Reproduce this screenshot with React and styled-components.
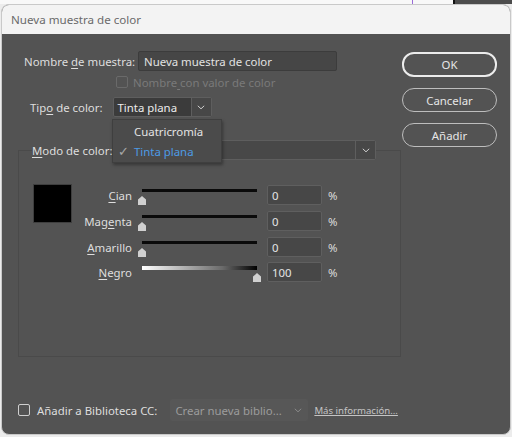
import React from "react";
import styled, { createGlobalStyle } from "styled-components";

const GlobalStyle = createGlobalStyle`
  html, body {
    margin: 0;
    padding: 0;
  }
  body {
    font-family: "Noto Sans", "Open Sans", sans-serif;
    font-size: 11.4px;
  }
`;

const Desktop = styled.div`
  width: 512px;
  height: 437px;
  box-sizing: border-box;
  padding: 4px 1px 0 1px;
  background-color: #ececec;
  background-image: linear-gradient(
    to right,
    #f8f8f8 412px,
    #9a6bd8 412px 413px,
    #f8f8f8 413px 453px,
    #111 453px 455px,
    #4c4c4c 455px
  );
  background-size: 100% 4px;
  background-repeat: no-repeat;
  overflow: hidden;
`;

const Window = styled.div`
  width: 510px;
  height: 431px;
  box-sizing: border-box;
  border: 1px solid #c9c9c9;
  border-radius: 8px;
  overflow: hidden;
  display: flex;
  flex-direction: column;
  background: #535353;
`;

const TitleBar = styled.div`
  height: 29px;
  flex: none;
  background: #f3f3f3;
  color: #6a6a6a;
  display: flex;
  align-items: center;
  padding-left: 9px;
  font-size: 11.6px;
`;

const Body = styled.div`
  flex: 1;
  display: flex;
  flex-direction: column;
  padding-top: 17px;
  color: #dcdcdc;
`;

const Main = styled.div`
  display: flex;
`;

const LeftColumn = styled.div`
  width: 400px;
  display: flex;
  flex-direction: column;
`;

const Row = styled.div`
  display: flex;
  align-items: center;
  height: ${({ $h }) => $h || 20}px;
  margin-left: ${({ $left }) => $left}px;
  margin-top: ${({ $top }) => $top || 0}px;
  gap: ${({ $gap }) => $gap || 0}px;
  position: relative;
`;

const Label = styled.span`
  color: ${({ $muted }) => ($muted ? "#7a7a7a" : "#dedede")};
  white-space: nowrap;
`;

const U = styled.span`
  text-decoration: underline;
  text-underline-offset: 2px;
`;

const TextInput = styled.div`
  width: ${({ $w }) => $w}px;
  height: 20px;
  box-sizing: border-box;
  background: #464646;
  border: 1px solid #3c3c3c;
  border-radius: 2px;
  color: #e2e2e2;
  display: flex;
  align-items: center;
  padding-left: 5px;
`;

const Checkbox = styled.span`
  width: 12px;
  height: 12px;
  box-sizing: border-box;
  border: 1px solid ${({ $disabled }) => ($disabled ? "#6a6a6a" : "#cfcfcf")};
  border-radius: 2px;
  flex: none;
`;

const Select = styled.div`
  width: ${({ $w }) => $w}px;
  height: 20px;
  display: flex;
  box-sizing: border-box;
  border: 1px solid #5e5e5e;
  border-radius: 2px;
  background: ${({ $dark }) => ($dark ? "#3b3b3b" : "#484848")};
`;

const SelectValue = styled.div`
  flex: 1;
  display: flex;
  align-items: center;
  padding-left: 4px;
  color: #ececec;
`;

const SelectArrow = styled.div`
  width: 19px;
  display: flex;
  align-items: center;
  justify-content: center;
  border-left: 1px solid #5e5e5e;
  background: #474747;
`;

const Chevron = ({ color = "#cfcfcf" }) => (
  <svg width="8" height="5" viewBox="0 0 8 5">
    <path d="M0.8 0.8 L4 3.8 L7.2 0.8" fill="none" stroke={color} strokeWidth="1" />
  </svg>
);

const Menu = styled.div`
  position: absolute;
  left: 82px;
  top: 22px;
  width: 110px;
  height: 44px;
  box-sizing: border-box;
  background: #4b4b4b;
  border: 1px solid #3f3f3f;
  box-shadow: 1px 2px 3px rgba(0, 0, 0, 0.35);
  z-index: 2;
  display: flex;
  flex-direction: column;
  padding-top: 1px;
`;

const MenuItem = styled.div`
  height: 21px;
  display: flex;
  align-items: center;
  padding-left: 5px;
  color: ${({ $active }) => ($active ? "#4d9be6" : "#e4e4e4")};
`;

const Check = styled.span`
  width: 16px;
  color: #a8a8a8;
  font-size: 13px;
  line-height: 1;
`;

const Group = styled.fieldset`
  margin: 23px 0 0 16px;
  width: 383px;
  height: 217px;
  box-sizing: border-box;
  border: 1px solid #4a4a4a;
  padding: 0;
  min-inline-size: 0;
`;

const Legend = styled.legend`
  margin-left: 13px;
  padding: 0;
  display: flex;
  align-items: center;
  height: 20px;
  gap: 3px;
`;

const GroupContent = styled.div`
  display: flex;
  padding: 24px 0 0 14px;
`;

const Swatch = styled.div`
  width: 39px;
  height: 39px;
  box-sizing: border-box;
  background: #000;
  border: 1px solid #3e3e3e;
  flex: none;
`;

const Sliders = styled.div`
  display: flex;
  flex-direction: column;
  gap: 6px;
  margin-top: 1px;
`;

const SliderRow = styled.div`
  display: grid;
  grid-template-columns: 60px 115px 55px auto;
  column-gap: 10px;
  height: 20px;
  align-items: center;
  &:last-child {
    margin-top: -1px;
  }
`;

const SliderLabel = styled.span`
  text-align: right;
  color: #dedede;
`;

const Track = styled.div`
  position: relative;
  height: 20px;
  &::before {
    content: "";
    position: absolute;
    left: 0;
    right: 0;
    top: 4px;
    height: ${({ $gradient }) => ($gradient ? 4 : 3)}px;
    background: ${({ $gradient }) =>
      $gradient ? "linear-gradient(to right, #ffffff, #6a6a6a 70%, #000)" : "#0a0a0a"};
  }
`;

const Thumb = styled.span`
  position: absolute;
  top: 11px;
  left: ${({ $pos }) => $pos}%;
  transform: translateX(-50%);
  width: 8px;
  height: 9px;
  background: #d0d0d0;
  clip-path: polygon(50% 0, 100% 40%, 100% 100%, 0 100%, 0 40%);
`;

const NumberInput = styled.div`
  height: 20px;
  box-sizing: border-box;
  background: #474747;
  border: 1px solid #5f5f5f;
  border-radius: 2px;
  color: #e4e4e4;
  display: flex;
  align-items: center;
  padding-left: 4px;
`;

const Percent = styled.span`
  color: #dedede;
  margin-left: -4px;
`;

const Buttons = styled.div`
  width: 95px;
  margin-top: 1px;
  display: flex;
  flex-direction: column;
  gap: 11px;
`;

const Button = styled.div`
  height: ${({ $primary }) => ($primary ? 25 : 24)}px;
  box-sizing: border-box;
  border: ${({ $primary }) => ($primary ? "2px solid #ececec" : "1px solid #bdbdbd")};
  border-radius: 12px;
  display: flex;
  align-items: center;
  justify-content: center;
  color: #e6e6e6;
`;

const Footer = styled.div`
  margin-top: auto;
  margin-bottom: 13px;
  margin-left: 16px;
  height: 22px;
  display: flex;
  align-items: center;
`;

const FooterLabel = styled(Label)`
  margin-left: 7px;
`;

const LibrarySelect = styled.div`
  width: 138px;
  height: 22px;
  margin-left: 13px;
  background: #575757;
  border-radius: 2px;
  display: flex;
  align-items: center;
  justify-content: space-between;
  padding: 0 6px 0 5px;
  box-sizing: border-box;
  color: #9c9c9c;
`;

const Link = styled.span`
  margin-left: 6px;
  font-size: 9.6px;
  color: #c4c4c4;
  text-decoration: underline;
`;

const channels = [
  { name: "Cian", u: 0, value: 0 },
  { name: "Magenta", u: 3, value: 0 },
  { name: "Amarillo", u: 0, value: 0 },
  { name: "Negro", u: 0, value: 100, gradient: true },
];

const Mnemonic = ({ text, u }) => (
  <>
    {text.slice(0, u)}
    <U>{text[u]}</U>
    {text.slice(u + 1)}
  </>
);

const App = () => {
  return (
    <>
      <GlobalStyle />
      <Desktop>
        <Window>
          <TitleBar>Nueva muestra de color</TitleBar>
          <Body>
            <Main>
              <LeftColumn>
                <Row $left={22} $gap={3}>
                  <Label>
                    Nombre <U>d</U>e muestra:
                  </Label>
                  <TextInput $w={199}>Nueva muestra de color</TextInput>
                </Row>
                <Row $left={114} $top={5} $h={12} $gap={5}>
                  <Checkbox $disabled />
                  <Label $muted>
                    Nombre<U> </U>con valor de color
                  </Label>
                </Row>
                <Row $left={28} $top={9} $gap={10}>
                  <Label>
                    Tip<U>o</U> de color:
                  </Label>
                  <Select $w={99} $dark>
                    <SelectValue>Tinta plana</SelectValue>
                    <SelectArrow>
                      <Chevron />
                    </SelectArrow>
                  </Select>
                  <Menu>
                    <MenuItem>
                      <Check />
                      Cuatricromía
                    </MenuItem>
                    <MenuItem $active>
                      <Check>✓</Check>
                      Tinta plana
                    </MenuItem>
                  </Menu>
                </Row>
                <Group>
                  <Legend>
                    <Label>
                      <U>M</U>odo de color:
                    </Label>
                    <Select $w={261}>
                      <SelectValue />
                      <SelectArrow>
                        <Chevron />
                      </SelectArrow>
                    </Select>
                  </Legend>
                  <GroupContent>
                    <Swatch />
                    <Sliders>
                      {channels.map((c) => (
                        <SliderRow key={c.name}>
                          <SliderLabel>
                            <Mnemonic text={c.name} u={c.u} />
                          </SliderLabel>
                          <Track $gradient={c.gradient}>
                            <Thumb $pos={c.value} />
                          </Track>
                          <NumberInput>{c.value}</NumberInput>
                          <Percent>%</Percent>
                        </SliderRow>
                      ))}
                    </Sliders>
                  </GroupContent>
                </Group>
              </LeftColumn>
              <Buttons>
                <Button $primary>OK</Button>
                <Button>Cancelar</Button>
                <Button>Añadir</Button>
              </Buttons>
            </Main>
            <Footer>
              <Checkbox />
              <FooterLabel>Añadir a Biblioteca CC:</FooterLabel>
              <LibrarySelect>
                <span>Crear nueva biblio...</span>
                <Chevron color="#8a8a8a" />
              </LibrarySelect>
              <Link>Más información...</Link>
            </Footer>
          </Body>
        </Window>
      </Desktop>
    </>
  );
};

export default App;
